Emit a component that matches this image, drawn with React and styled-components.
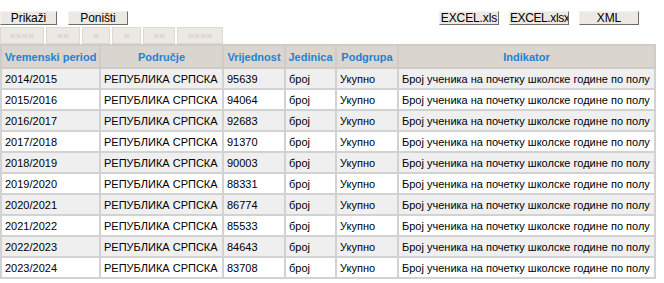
import React from "react";
import styled, { createGlobalStyle } from "styled-components";

const rows = [
  ["2014/2015", "95639"],
  ["2015/2016", "94064"],
  ["2016/2017", "92683"],
  ["2017/2018", "91370"],
  ["2018/2019", "90003"],
  ["2019/2020", "88331"],
  ["2020/2021", "86774"],
  ["2021/2022", "85533"],
  ["2022/2023", "84643"],
  ["2023/2024", "83708"],
];

const pager = [
  ["««««", 44],
  ["««", 34],
  ["«", 28],
  ["»", 29],
  ["»»", 32],
  ["»»»»", 46],
];

const App = () => {
  return (
    <Page>
      <GlobalStyle />
      <Toolbar>
        <Group>
          <ActionButton $w={57}>Prikaži</ActionButton>
          <ActionButton $w={60}>Poništi</ActionButton>
        </Group>
        <ExportGroup>
          <ActionButton $w={60}>EXCEL.xls</ActionButton>
          <ActionButton $w={60} $tight>EXCEL.xlsx</ActionButton>
          <ActionButton $w={60}>XML</ActionButton>
        </ExportGroup>
      </Toolbar>
      <Pager>
        {pager.map(([label, w]) => (
          <PageButton key={label} $w={w} disabled>
            {label}
          </PageButton>
        ))}
      </Pager>
      <Table>
        <colgroup>
          <col style={{ width: 99 }} />
          <col style={{ width: 123 }} />
          <col style={{ width: 62 }} />
          <col style={{ width: 51 }} />
          <col style={{ width: 62 }} />
          <col />
        </colgroup>
        <thead>
          <tr>
            <Th>Vremenski period</Th>
            <Th>Područje</Th>
            <Th>Vrijednost</Th>
            <Th>Jedinica</Th>
            <Th>Podgrupa</Th>
            <Th>Indikator</Th>
          </tr>
        </thead>
        <tbody>
          {rows.map(([period, value], i) => (
            <Row key={period} $odd={i % 2 === 0}>
              <Td>{period}</Td>
              <Td>РЕПУБЛИКА СРПСКА</Td>
              <Td>{value}</Td>
              <Td>број</Td>
              <Td>Укупно</Td>
              <Td>Број ученика на почетку школске године по полу</Td>
            </Row>
          ))}
        </tbody>
      </Table>
    </Page>
  );
};

const GlobalStyle = createGlobalStyle`
  body {
    margin: 0;
    background: #ffffff;
    font-family: "Liberation Sans", Arial, sans-serif;
  }
`;

const Page = styled.div`
  width: 664px;
  padding-top: 11px;
`;

const Toolbar = styled.div`
  display: flex;
  align-items: center;
  height: 14px;
`;

const Group = styled.div`
  display: flex;
  gap: 11px;
`;

const ExportGroup = styled.div`
  display: flex;
  gap: 10px;
  margin-left: 311px;
`;

const ActionButton = styled.button`
  box-sizing: border-box;
  width: ${(p) => p.$w}px;
  height: 14px;
  padding: 0;
  font-family: "Liberation Sans", Arial, sans-serif;
  font-size: 12px;
  line-height: 12px;
  letter-spacing: ${(p) => (p.$tight ? "-0.4px" : "-0.1px")};
  color: #000;
  background: #ece9e4;
  border: 1px solid;
  border-color: #f4f2ee #6f6b66 #6f6b66 #f4f2ee;
  border-radius: 0;
  white-space: nowrap;
  overflow: hidden;
`;

const Pager = styled.div`
  display: flex;
  gap: 2px;
  margin-top: 2px;
  height: 17px;
`;

const PageButton = styled.button`
  box-sizing: border-box;
  width: ${(p) => p.$w}px;
  height: 17px;
  padding: 0;
  font-family: "Liberation Sans", Arial, sans-serif;
  font-size: 11px;
  line-height: 11px;
  color: #cdc9c2;
  background: #ece9e4;
  border: 1px solid #dcd8d2;
  border-radius: 0;
`;

const Table = styled.table`
  width: 656px;
  border-collapse: collapse;
  table-layout: fixed;
  font-size: 11px;
  border: 2px solid #cfcdcb;
`;

const Th = styled.th`
  height: 21px;
  padding: 0 2px;
  font-weight: bold;
  font-size: 11px;
  color: #1f82d4;
  background: #dad5ce;
  border: 2px solid #cfcbc6;
  text-align: center;
  white-space: nowrap;
`;

const Row = styled.tr`
  background: ${(p) => (p.$odd ? "#efefef" : "#ffffff")};
`;

const Td = styled.td`
  height: 19px;
  padding: 0 3px;
  color: #000;
  border: 2px solid #d2d2d2;
  white-space: nowrap;
  overflow: hidden;
`;

export default App;
